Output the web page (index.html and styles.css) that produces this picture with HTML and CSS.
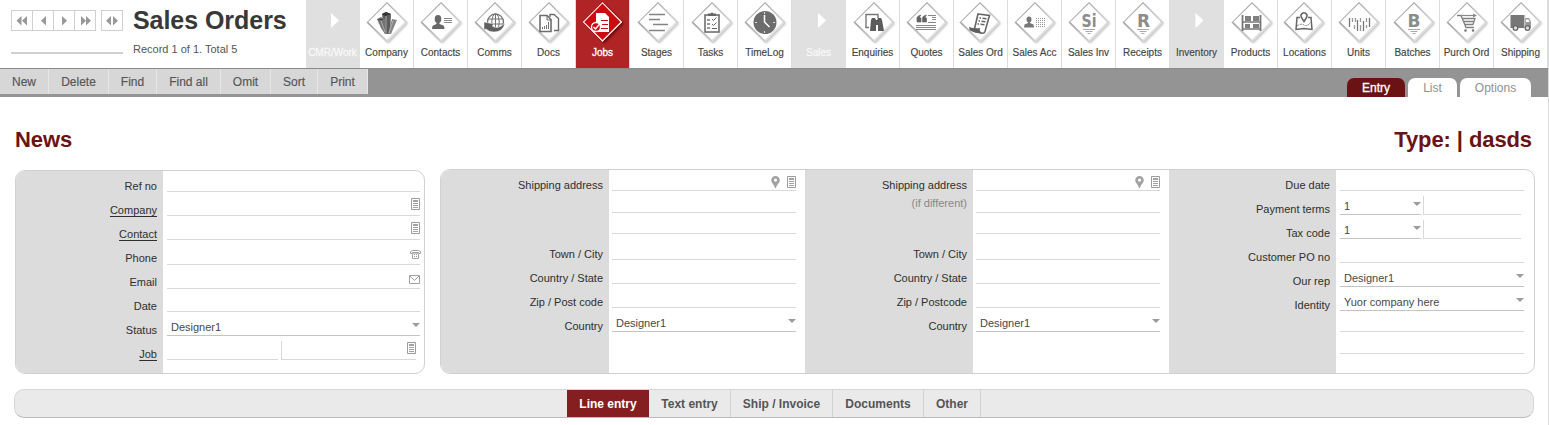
FILE: index.html
```html
<!DOCTYPE html>
<html lang="en">
<head>
<meta charset="utf-8">
<title>Sales Orders</title>
<link rel="stylesheet" href="styles.css">
</head>
<body>
<svg class="defs" width="0" height="0" aria-hidden="true">
  <defs>
    <linearGradient id="edge" x1="0" y1="0" x2="1" y2="1">
      <stop offset="0.25" stop-color="#9a9a9a"/><stop offset="0.5" stop-color="#bcbcbc"/><stop offset="0.75" stop-color="#cfcfcf"/>
    </linearGradient>
    <filter id="soft" x="-20%" y="-20%" width="150%" height="150%"><feGaussianBlur stdDeviation="0.8"/></filter>
    <symbol id="diamond" viewBox="0 0 54 46">
      <path d="M28.500 4.500 48 23.500 28.500 43.500 9 23.500Z" fill="#999" opacity=".6" filter="url(#soft)"/>
      <path d="M27 2.500 47 22.500 27 42.500 7 22.500Z" fill="url(#edge)" stroke="url(#edge)" stroke-width=".7" stroke-linejoin="round"/>
      <path d="M27 3.400 45 22 27 40 8.200 22Z" fill="#fff"/>
      <path d="M45.500 22.600 27 41" stroke="#e2e2e2" stroke-width="1.600"/>
    </symbol>
    <symbol id="diamond-red" viewBox="0 0 54 46">
      <path d="M28.500 4.500 48 23.500 28.500 43.500 9 23.500Z" fill="#500" opacity=".7" filter="url(#soft)"/>
      <path d="M26.500 2.500 46 22 26.500 41.500 7 22Z" fill="#fff" stroke="#e8c8c8" stroke-linejoin="round"/>
      <path d="M26.500 3.500 44.500 22 26.500 40 8.200 22Z" fill="#cc0a10"/>
    </symbol>
    <symbol id="doc" viewBox="0 0 9 12">
      <path d="M.5.5h8v11h-8z" fill="#fff" stroke="#9c9c9c"/>
      <path d="M2 2h5v2H2zM2 5h5v1H2zM2 7h5v1H2zM2 9h5v1H2z" fill="#a2a2a2"/>
    </symbol>
    <symbol id="pin" viewBox="0 0 9 12">
      <path d="M4.500 0A4.300 4.300 0 0 0 .2 4.300C.2 7 3.300 8.500 4 12h1C5.700 8.500 8.800 7 8.800 4.300A4.300 4.300 0 0 0 4.500 0zm0 2.500a1.600 1.600 0 1 1 0 3.200 1.600 1.600 0 0 1 0-3.200z" fill="#a2a2a2"/>
    </symbol>
  </defs>
</svg>
<div class="app">
  <header class="header">
    <div class="record-nav">
      <div class="record-buttons">
        <div class="btn-group">
          <span class="nav-btn"><svg width="20" height="19"><path d="M9.500 5v9.500L4.500 9.700zM15 5v9.500L10 9.700z"/></svg></span>
          <span class="nav-btn"><svg width="20" height="19"><path d="M13 5v9.500L8 9.700z"/></svg></span>
          <span class="nav-btn"><svg width="20" height="19"><path d="M8 5v9.500l5-4.800z"/></svg></span>
          <span class="nav-btn"><svg width="20" height="19"><path d="M6 5v9.500l5-4.800zM11 5v9.500l5-4.800z"/></svg></span>
        </div>
        <div class="btn-group">
          <span class="nav-btn"><svg width="20" height="19"><path d="M9 5v9.500L4 9.700zM11 5v9.500l5-4.800z"/></svg></span>
        </div>
      </div>
      <div class="progress"></div>
    </div>
    <div class="heading">
      <h1 class="title">Sales Orders</h1>
      <p class="record">Record 1 of 1. Total 5</p>
    </div>
    <nav class="modules">
      <a class="module section faint"><svg class="icon" viewBox="0 0 54 46"><path d="M25 13v15l8-7.500z" fill="#fff"/></svg><span>CMR/Work</span></a>
      <a class="module"><svg class="icon" viewBox="0 0 54 46"><use href="#diamond"/>
        <path d="M22 14l4-2 5 2-1 20h-5z" fill="#5c5c5c"/><path d="M17 19l4-2 4 2v15l-4-6z" fill="#747474"/><path d="M32 19l5 1-6 14h-3z" fill="#858585"/><path d="M22 14l3 2 6-2-5-2zM17 19l4 1 3-1" fill="#333"/><path d="M26 16v18M21 21l4 11M33 21l-4 12" stroke="#bbb" stroke-width=".8" fill="none"/></svg><span>Company</span></a>
      <a class="module"><svg class="icon" viewBox="0 0 54 46"><use href="#diamond"/>
        <ellipse cx="24" cy="19" rx="3.300" ry="4" fill="#686868"/><path d="M22.500 21h3v3l4 1.500q1 .5 1 3.500H18q0-3 1-3.500l3.500-1.500z" fill="#686868"/><path d="M30 18.500h8M30 20.500h8M30 22.500h8" stroke="#8a8a8a"/></svg><span>Contacts</span></a>
      <a class="module"><svg class="icon" viewBox="0 0 54 46"><use href="#diamond"/>
        <circle cx="27.500" cy="22" r="8" fill="#fff" stroke="#737373" stroke-width="1.300"/><ellipse cx="27.500" cy="22" rx="3.700" ry="8" fill="none" stroke="#737373"/><path d="M27.500 14v16M20 19h15M20 24h15" stroke="#737373"/><path d="M16 22l10 2-2 2q6 4 13-3-2 9-11 9-5 0-8-3l-2 1z" fill="#606060" stroke="#fff" stroke-width=".5"/></svg><span>Comms</span></a>
      <a class="module"><svg class="icon" viewBox="0 0 54 46"><use href="#diamond"/>
        <path d="M28 17v-2.500h4l4.500 4v12H32" fill="#fff" stroke="#6d6d6d" stroke-width="1.400"/><path d="M18 15.500h7l4 4v12H18z" fill="#fff" stroke="#6d6d6d" stroke-width="1.600"/><path d="M25 15.500V20h4" fill="none" stroke="#6d6d6d"/><path d="M20.500 29v-2M22.500 29v-3M24.500 29v-4M26.500 29v-7" stroke="#777"/></svg><span>Docs</span></a>
      <a class="module active"><svg class="icon" viewBox="0 0 54 46"><use href="#diamond-red"/>
        <path d="M20 13h9l4 4v15H20z" fill="#fff"/><path d="M25 20.500h7M26 24.500h6M25 28.500h7" stroke="#cc0a10"/><circle cx="20" cy="27" r="4.500" fill="#cc0a10" stroke="#fff" stroke-width="1.300"/><path d="M17.500 27l2 2 5-6" fill="none" stroke="#fff" stroke-width="1.500"/></svg><span>Jobs</span></a>
      <a class="module"><svg class="icon" viewBox="0 0 54 46"><g transform="translate(1 0)"><use href="#diamond" width="54" height="46"/>
        <path d="M18 14.500h16M18 19.500h11M22 24.500h15M18 30.500h16" stroke="#848484" stroke-width="1.300"/></g></svg><span>Stages</span></a>
      <a class="module"><svg class="icon" viewBox="0 0 54 46"><g transform="translate(1 0)"><use href="#diamond" width="54" height="46"/>
        <path d="M20 15h14v17H20z" fill="#fff" stroke="#666" stroke-width="1.500"/><path d="M23 16v-2.500h2.500q1.500-2 3 0H31V16z" fill="#666"/><path d="M22 20h3M22 24h3M22 28h3" stroke="#777" stroke-width="1.500"/><path d="M27 19l1.500 1.500 3-3M27 24l1.500 1.500 3-3M27 28.500h5" fill="none" stroke="#666"/></g></svg><span>Tasks</span></a>
      <a class="module"><svg class="icon" viewBox="0 0 54 46"><use href="#diamond"/>
        <circle cx="27" cy="22.500" r="11.500" fill="#6c6c6c"/><path d="M26.500 15v7l5 5" fill="none" stroke="#fff" stroke-width="1.500"/><path d="M26.500 12v2M26.500 31v2M17 22.500h2M35 22.500h2" stroke="#ddd"/></svg><span>TimeLog</span></a>
      <a class="module section faint"><svg class="icon" viewBox="0 0 54 46"><path d="M26 13v15l8-7.500z" fill="#fff"/></svg><span>Sales</span></a>
      <a class="module"><svg class="icon" viewBox="0 0 54 46"><g transform="translate(1 0)"><use href="#diamond" width="54" height="46"/>
        <path d="M22 27.500h-3v-13h12V18" fill="none" stroke="#777" stroke-width="1.400"/><path d="M24 20l1-2h3l1 2h1l1-2h3l1 2 2 11h-6v-6h-2v6h-6z" fill="#5c5c5c"/></g></svg><span>Enquiries</span></a>
      <a class="module"><svg class="icon" viewBox="0 0 54 46"><use href="#diamond"/>
        <path d="M17 20q-1-4 4-5-2 2-1 3h1v4h-4zM22.500 20q-1-4 4-5-2 2-1 3h1v4h-4z" fill="#636363" stroke="#636363" stroke-width=".6"/><path d="M28 15.500h8M32 17.500h4M32 19.500h4M28 22.500h8M16 25.500h20M16 27.500h20M16 29.500h20" stroke="#888"/></svg><span>Quotes</span></a>
      <a class="module"><svg class="icon" viewBox="0 0 54 46"><g transform="translate(-1 0)"><use href="#diamond" width="54" height="46"/>
        <path d="M25 14l11.500 1.500-4.500 16q-1 2.500-4 1.500l-7-2z" fill="#fff" stroke="#666" stroke-width="1.600"/><path d="M16 27q5 2 11 1-1 3 2 5-5 1-11-2-2-1-2-4z" fill="#606060"/><path d="M26.500 18H28M29.500 18.200l4 .5M25.500 21H27M28.500 21.200l4 .5M24.500 24H26M27.500 24.200l4 .5" stroke="#666" stroke-width="1.400"/></g></svg><span>Sales Ord</span></a>
      <a class="module"><svg class="icon" viewBox="0 0 54 46"><use href="#diamond"/>
        <ellipse cx="21" cy="19.500" rx="2.500" ry="3" fill="#777"/><path d="M20 21h2v2l3.500 1.500.5 3H16l.5-3L20 23z" fill="#777"/><path d="M28 18.500h10M28 20.500h10M28 22.500h10M28 24.500h10M28 26.500h10" stroke="#999" stroke-dasharray="1 1"/></svg><span>Sales Acc</span></a>
      <a class="module"><svg class="icon" viewBox="0 0 54 46"><use href="#diamond"/><text class="icon-letter" x="27" y="27" textLength="15" lengthAdjust="spacingAndGlyphs">Si</text><path d="M21 29.500h12M23.500 31.500h7M25.500 33.500h3" stroke="#aaa"/></svg><span>Sales Inv</span></a>
      <a class="module"><svg class="icon" viewBox="0 0 54 46"><use href="#diamond"/><text class="icon-letter" x="27.500" y="27">R</text><path d="M21 29.500h12M23.500 31.500h7M25.500 33.500h3" stroke="#aaa"/></svg><span>Receipts</span></a>
      <a class="module section"><svg class="icon" viewBox="0 0 54 46"><path d="M25.500 13v15l8-7.500z" fill="#fff"/></svg><span>Inventory</span></a>
      <a class="module"><svg class="icon" viewBox="0 0 54 46"><g transform="translate(1 0)"><use href="#diamond" width="54" height="46"/>
        <path d="M17.500 15v16M35.500 15v16" stroke="#777" stroke-width="1.800"/><path d="M17 22h19M17 29h19" stroke="#777" stroke-width="1.400"/><path d="M20 16h6v5h-6zM28 16h6v5h-6zM20 24h5v4h-5zM28 24h6v4h-6z" fill="#808080"/></g></svg><span>Products</span></a>
      <a class="module"><svg class="icon" viewBox="0 0 54 46"><g transform="translate(-1 0)"><use href="#diamond" width="54" height="46"/>
        <path d="M23 17.500h-3l-1 12 8-1 8 1-1-12h-3" fill="none" stroke="#666" stroke-width="1.500"/><path d="M20 26q4-3 7-1t7-3" fill="none" stroke="#777" stroke-dasharray="2 1"/><path d="M27 21.500l-2.500-4a3 3 0 1 1 5 0z" fill="#fff" stroke="#666" stroke-width="1.500"/></g></svg><span>Locations</span></a>
      <a class="module"><svg class="icon" viewBox="0 0 54 46"><use href="#diamond"/>
        <path d="M17.500 18v9M37.500 18v9M25.500 20v11M31.500 21v10" stroke="#777" stroke-width="1.300"/><path d="M20.500 18v4M23.500 18v4M28.500 18v4M34.500 18v4M22.500 25v4M28.500 25v6M34.500 25v3" stroke="#999" stroke-width="1.300"/></svg><span>Units</span></a>
      <a class="module"><svg class="icon" viewBox="0 0 54 46"><g transform="translate(1 0)"><use href="#diamond" width="54" height="46"/><text class="icon-letter" x="27" y="27">B</text><path d="M21 29.500h12M23.500 31.500h7M25.500 33.500h3" stroke="#aaa"/></g></svg><span>Batches</span></a>
      <a class="module"><svg class="icon" viewBox="0 0 54 46"><use href="#diamond"/>
        <path d="M17 15.500h4l5 12h8M22 18.500h13l-2 6h-8M24 21.500h10" fill="none" stroke="#808080" stroke-width="1.300"/><path d="M21 15.500h13" stroke="#888" stroke-width="1.200"/><path d="M33 13.500l4 2-4 2z" fill="#888"/><circle cx="25.500" cy="30.500" r="1.300" fill="#777"/><circle cx="33" cy="30.500" r="1.300" fill="#777"/></svg><span>Purch Ord</span></a>
      <a class="module"><svg class="icon" viewBox="0 0 54 46"><use href="#diamond"/>
        <path d="M16.500 15h14v13h-14z" fill="#777"/><path d="M31 18h4l2 4v6h-6z" fill="#999"/><path d="M32 19.500h2.500l1 2.500H32z" fill="#fff"/><path d="M31 15v12" stroke="#ccc" stroke-width=".8"/><circle cx="21.500" cy="28" r="2.300" fill="#ddd" stroke="#666" stroke-width="1.300"/><circle cx="33.500" cy="28" r="2.300" fill="#ddd" stroke="#666" stroke-width="1.300"/></svg><span>Shipping</span></a>
    </nav>
  </header>

  <div class="toolbar">
    <div class="actions">
      <a class="action new">New</a><a class="action delete">Delete</a><a class="action find">Find</a><a class="action find-all">Find all</a><a class="action omit">Omit</a><a class="action sort">Sort</a><a class="action print">Print</a>
    </div>
    <div class="views">
      <a class="view entry">Entry</a><a class="view list">List</a><a class="view options">Options</a>
    </div>
  </div>

  <div class="headline"><h2>News</h2><h2 class="type">Type: | dasds</h2></div>

  <main class="panels">
    <section class="panel customer">
      <div class="labels">
        <span>Ref no</span><span><u>Company</u></span><span><u>Contact</u></span><span>Phone</span><span>Email</span><span>Date</span><span>Status</span><span><u>Job</u></span>
      </div>
      <div class="fields">
        <div class="field h21"></div>
        <div class="field icons-5"><svg width="9" height="12"><use href="#doc"/></svg></div>
        <div class="field icons-5"><svg width="9" height="12"><use href="#doc"/></svg></div>
        <div class="field h25 phone"><svg width="11" height="9" viewBox="0 0 11 9"><path d="M.5 3.500v-2l2-1h6l2 1v2h-2v-1h-6v1zM2.500 4.500l1-1.500h4l1 1.500v4h-6z" fill="#fff" stroke="#a0a0a0"/><path d="M4 4h1v1H4zM6 4h1v1H6zM4 6h1v1H4zM6 6h1v1H6z" fill="#999"/></svg></div>
        <div class="field icons-4"><svg width="11" height="9" viewBox="0 0 11 9"><path d="M.5.5h10v8H.5zM1 1l4.500 4.500L10 1" fill="none" stroke="#a0a0a0"/></svg></div>
        <div class="field h23"></div>
        <div class="field select">Designer1</div>
        <div class="split"><div class="field job-code"></div><div class="field job-name icons-5"><svg width="9" height="12"><use href="#doc"/></svg></div></div>
      </div>
    </section>

    <section class="panel details">
      <div class="column first">
        <div class="labels"><span class="address">Shipping address</span><span>Town / City</span><span>Country / State</span><span>Zip / Post code</span><span>Country</span></div>
        <div class="fields">
          <div class="field h21 icons-2"><svg width="9" height="12"><use href="#pin"/></svg><svg width="9" height="12"><use href="#doc"/></svg></div>
          <div class="field h22"></div><div class="field h21"></div><div class="field h26"></div><div class="field"></div><div class="field"></div>
          <div class="field select">Designer1</div>
        </div>
      </div>
      <div class="column second">
        <div class="labels"><span class="address">Shipping address<small>(if different)</small></span><span>Town / City</span><span>Country / State</span><span>Zip / Postcode</span><span>Country</span></div>
        <div class="fields">
          <div class="field h21 icons-2"><svg width="9" height="12"><use href="#pin"/></svg><svg width="9" height="12"><use href="#doc"/></svg></div>
          <div class="field h22"></div><div class="field h21"></div><div class="field h26"></div><div class="field"></div><div class="field"></div>
          <div class="field select">Designer1</div>
        </div>
      </div>
      <div class="column third">
        <div class="labels"><span>Due date</span><span>Payment terms</span><span>Tax code</span><span>Customer PO no</span><span>Our rep</span><span>Identity</span></div>
        <div class="fields">
          <div class="field h21"></div>
          <div class="split"><div class="field select code">1</div><div class="field code-name"></div></div>
          <div class="split"><div class="field select code">1</div><div class="field code-name"></div></div>
          <div class="field"></div>
          <div class="field select">Designer1</div>
          <div class="field select">Yuor company here</div>
          <div class="field h21"></div><div class="field h22"></div>
        </div>
      </div>
    </section>
  </main>

  <nav class="tabs">
    <a class="tab line-entry">Line entry</a><a class="tab text-entry">Text entry</a><a class="tab ship">Ship / Invoice</a><a class="tab documents">Documents</a><a class="tab other">Other</a>
  </nav>
</div>
</body>
</html>
```
FILE: styles.css
```css
* { box-sizing: border-box; }
body { margin: 0; background: #fff; font-family: "Liberation Sans", Arial, sans-serif; color: #555; overflow: hidden; }
h1, h2, p { margin: 0; }
svg { display: block; flex: none; }
.defs { position: absolute; }
.app { width: 1549px; height: 425px; border-right: 1px solid #dcdcdc; }

/* Header */
.header { display: flex; height: 68px; }
.record-nav { width: 112px; margin: 10px 10px 0 11px; }
.record-buttons { display: flex; justify-content: space-between; }
.btn-group { display: flex; border: 1px solid #d0d0d0; height: 21px; }
.nav-btn { width: 21px; border-left: 1px solid #d0d0d0; }
.nav-btn:first-child { width: 20px; border-left: 0; }
.nav-btn path { fill: #999; }
.progress { height: 2px; margin-top: 21px; background: #d0d0d0; }
.heading { width: 173px; }
.title { margin-top: 6px; font-size: 25px; line-height: 28px; letter-spacing: -.05px; color: #383838; white-space: nowrap; }
.record { margin-top: 9px; font-size: 11px; line-height: 13px; }
.modules { display: flex; }
.module { width: 54px; height: 68px; border-right: 1px solid #dcdcdc; text-align: center; font-size: 10px; line-height: 12px; color: #444; -webkit-text-stroke: .15px #444; white-space: nowrap; }
.module span { display: block; margin: 1px -3px 0; }
.icon { width: 54px; height: 46px; -webkit-text-stroke: 0; }
.module.section { background: #e0e0e0; border-color: #e0e0e0; }
.module.faint { color: #f8f8f8; -webkit-text-stroke: .3px #f8f8f8; }
.module.active { background: #b02426; color: #fff; -webkit-text-stroke: .3px #fff; }
.icon-letter { font: bold 17px "DejaVu Sans", sans-serif; text-anchor: middle; fill: #8c8c8c; }

/* Toolbar */
.toolbar { display: flex; justify-content: space-between; height: 29px; background: #949494; border-top: 1px solid #8a8a8a; font-size: 12px; }
.actions { display: flex; height: 25px; line-height: 26px; }
.action { background: #d7d7d7; border-right: 1px solid #e6e6e6; text-align: center; color: #555; -webkit-text-stroke: .15px #555; }
.new { width: 49px; }
.delete { width: 60px; }
.find { width: 48px; }
.find-all { width: 64px; }
.omit { width: 50px; }
.sort { width: 47px; }
.print { width: 50px; }
.views { display: flex; gap: 3px; margin: 9px 17px 0 0; line-height: 20px; text-align: center; }
.view { background: #fff; color: #909090; border-radius: 7px 7px 0 0; }
.view.entry { width: 58px; background: #6a1214; color: #fff; -webkit-text-stroke: .3px #fff; }
.view.list { width: 49px; }
.view.options { width: 71px; }

/* Record headline */
.headline { display: flex; justify-content: space-between; height: 72px; padding: 29px 16px 0 15px; color: #6a1214; }
.headline h2 { font-size: 22px; line-height: 27px; letter-spacing: -.1px; }

/* Form panels */
.panels { display: flex; align-items: flex-end; gap: 15px; height: 205px; padding-left: 15px; }
.panel { display: flex; border: 1px solid #d0d0d0; border-radius: 10px; overflow: hidden; font-size: 11px; }
.customer { width: 410px; height: 204px; }
.details { width: 1095px; height: 205px; }
.column { display: flex; width: 364px; }
.labels { display: flex; flex-direction: column; flex: none; padding: 3px 6px 0 0; background: #dcdcdc; color: #2e2e2e; text-align: right; line-height: 24px; }
.labels span { height: 24px; }
.labels u { text-underline-offset: 2px; }
.labels .address { height: 69px; }
.labels small { display: block; margin-top: -3px; font-size: 11px; line-height: 18px; color: #888; }
.customer .labels { width: 147px; }
.first .labels { width: 168px; }
.second .labels { width: 168px; }
.third .labels { width: 167px; }
.first .fields, .second .fields { margin-left: 3px; width: 184px; }
.third .fields { margin-left: 4px; width: 184px; }
.customer .fields { margin-left: 4px; width: 253px; }
.field { display: flex; justify-content: flex-end; align-items: flex-end; gap: 7px; height: 24px; border-bottom: 1px solid #d9d9d9; }
.h21 { height: 21px; }
.h22 { height: 22px; }
.h23 { height: 23px; }
.h25 { height: 25px; }
.h26 { height: 26px; }
.icons-2 { padding-bottom: 2px; }
.icons-4 { padding-bottom: 4px; }
.icons-5 { padding-bottom: 5px; }
.phone { padding-bottom: 5px; }
.phone svg { margin-right: -1px; }
.select { justify-content: space-between; align-items: flex-start; padding: 8px 0 0 4px; border-color: #c4c4c4; line-height: 14px; color: #484848; }
.select::after { content: ""; margin-top: 3px; border: solid transparent; border-width: 4px 4px 0; border-top-color: #9c9c9c; }
.split { display: flex; height: 24px; }
.job-code { width: 111px; margin-right: 3px; }
.job-name { width: 135px; height: 19px; margin-top: 5px; border-left: 1px solid #d9d9d9; }
.code { width: 81px; margin-right: 2px; }
.code-name { width: 98px; height: 19px; margin-top: 5px; border-left: 1px solid #d9d9d9; }

/* Bottom tabs */
.tabs { display: flex; width: 1520px; height: 29px; margin: 15px 0 0 14px; padding-left: 552px; background: #eaeaea; border: 1px solid #d6d6d6; border-bottom-color: #bbb; border-radius: 10px; font-size: 12px; font-weight: bold; line-height: 28px; text-align: center; }
.tab { height: 27px; border-right: 1px solid #d2d2d2; }
.tab.line-entry { width: 82px; background: #851e20; border: 0; color: #fff; }
.text-entry { width: 82px; }
.ship { width: 102px; }
.documents { width: 91px; }
.other { width: 57px; }
```
